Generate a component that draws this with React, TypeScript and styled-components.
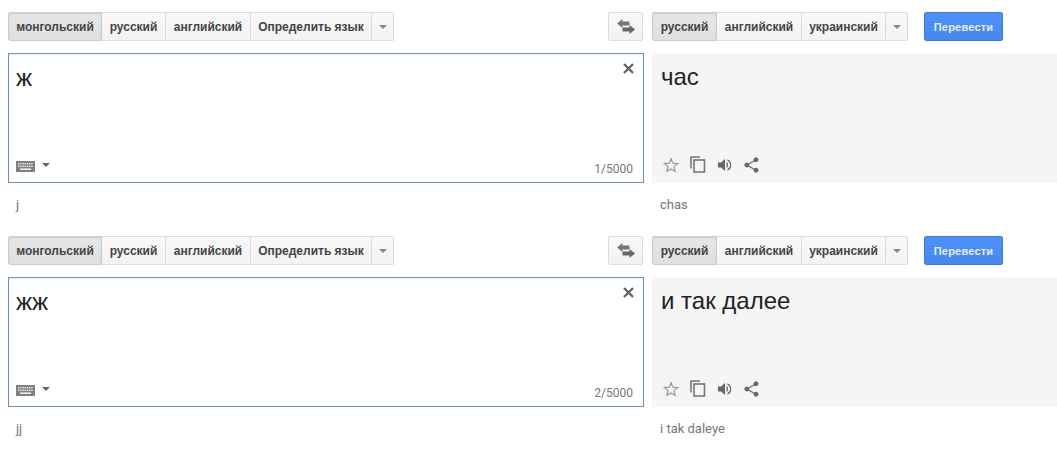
import React from "react";
import styled, { createGlobalStyle } from "styled-components";

const Global = createGlobalStyle`
  html, body { margin: 0; padding: 0; background: #fff; }
  body { font-family: "Liberation Sans", Arial, sans-serif; width: 1057px; height: 449px; overflow: hidden; }
`;

const Page = styled.div`
  display: flex;
  flex-direction: column;
  padding: 12px 0 0 8px;
`;

const Section = styled.section`
  display: grid;
  grid-template-columns: 636px 405px;
  grid-template-rows: 41px 130px 53px;
  column-gap: 8px;
`;

const ToolRow = styled.div`
  display: flex;
  align-items: flex-start;
`;

const LeftTools = styled(ToolRow)`
  justify-content: space-between;
`;

const Group = styled.div`
  display: flex;
`;

const LangButton = styled.button<{ $w: number; $active?: boolean; $first?: boolean; $last?: boolean }>`
  box-sizing: border-box;
  width: ${(p) => p.$w}px;
  height: 29px;
  padding: 0;
  margin: 0;
  border: 1px solid ${(p) => (p.$active ? "#ccc" : "#dcdcdc")};
  border-left-width: ${(p) => (p.$first ? 1 : 0)}px;
  border-radius: ${(p) => (p.$first ? "2px 0 0 2px" : p.$last ? "0 2px 2px 0" : "0")};
  background: ${(p) => (p.$active ? "linear-gradient(#e6e6e6, #e0e0e0)" : "linear-gradient(#f8f8f8, #f3f3f3)")};
  box-shadow: ${(p) => (p.$active ? "inset 0 1px 2px rgba(0,0,0,.1)" : "none")};
  color: #444;
  font: bold 12px "Liberation Sans", Arial, sans-serif;
  display: flex;
  align-items: center;
  justify-content: center;
`;

const Caret = styled.span`
  width: 0;
  height: 0;
  border-left: 4px solid transparent;
  border-right: 4px solid transparent;
  border-top: 4px solid #8a8a8a;
`;

const KeyCaret = styled(Caret)`
  border-top-color: #666;
  margin-bottom: 4px;
`;

const SwapButton = styled.button`
  box-sizing: border-box;
  width: 35px;
  height: 29px;
  margin-right: 1px;
  padding: 0;
  border: 1px solid #dcdcdc;
  border-radius: 2px;
  background: linear-gradient(#f8f8f8, #f2f2f2);
  display: flex;
  align-items: center;
  justify-content: center;
`;

const Translate = styled.button`
  box-sizing: border-box;
  width: 79px;
  height: 29px;
  margin-left: 16px;
  padding: 0;
  border: 1px solid #3a7de0;
  border-radius: 2px;
  background: linear-gradient(#4d90fe, #4787ed);
  color: #e8eefb;
  font: bold 11px "Liberation Sans", Arial, sans-serif;
  letter-spacing: 0.2px;
`;

const InputBox = styled.div`
  box-sizing: border-box;
  position: relative;
  height: 130px;
  border: 1px solid #6d93b8;
  background: #fff;
  box-shadow: inset 0 1px 2px rgba(0,0,0,.08);
`;

const OutputBox = styled.div`
  position: relative;
  height: 130px;
  background: #f5f5f5;
`;

const SourceText = styled.div`
  padding: 8px 7px 0;
  font-size: 24px;
  line-height: 32px;
  color: #222;
`;

const OutputText = styled.div`
  padding: 8px 9px 0;
  font-size: 24px;
  line-height: 32px;
  color: #222;
`;

const Clear = styled.svg`
  position: absolute;
  top: 9px;
  right: 9px;
`;

const Keyboard = styled.div`
  position: absolute;
  left: 7px;
  bottom: 10px;
  display: flex;
  align-items: center;
  gap: 7px;
`;

const Count = styled.div`
  position: absolute;
  right: 10px;
  bottom: 6px;
  font: 12px Roboto, "Liberation Sans", sans-serif;
  color: #777;
`;

const Actions = styled.div`
  position: absolute;
  left: 11px;
  bottom: 10px;
  display: flex;
  align-items: center;
  gap: 11px;
`;

const Roman = styled.div`
  padding: 14px 8px 0;
  font: 13px Roboto, "Liberation Sans", sans-serif;
  line-height: 15px;
  color: #777;
`;

const SwapIcon = () => (
  <svg width="18" height="15" viewBox="0 0 18 15">
    <path d="M0 4.5 L5.5 0 V2.5 H12.5 V6.5 H5.5 V9 Z" fill="#777" />
    <path d="M18 10.5 L12.5 6 V8.5 H5.5 V12.5 H12.5 V15 Z" fill="#666" />
  </svg>
);

const KeyboardIcon = () => (
  <svg width="19" height="11" viewBox="0 0 19 11">
    <rect width="19" height="11" fill="#808080" />
    <g fill="#eee">
      {[0, 1, 2, 3, 4, 5, 6].map((i) => (
        <rect key={i} x={2 + i * 2.2} y="2" width="1.4" height="1.4" />
      ))}
      {[0, 1, 2, 3, 4, 5, 6].map((i) => (
        <rect key={i} x={2 + i * 2.2} y="4.6" width="1.4" height="1.4" />
      ))}
      <rect x="4" y="7.4" width="11" height="1.6" />
    </g>
  </svg>
);

const Star = () => (
  <svg width="16" height="16" viewBox="0 0 24 24" fill="none" stroke="#999" strokeWidth="1.8">
    <path d="M12 2.6 L14.8 9.2 L22 9.8 L16.5 14.5 L18.2 21.5 L12 17.8 L5.8 21.5 L7.5 14.5 L2 9.8 L9.2 9.2 Z" />
  </svg>
);

const Copy = () => (
  <svg width="16" height="17" viewBox="0 0 16 17" fill="none" stroke="#777" strokeWidth="1.6">
    <path d="M1 12.5 V1 H10" />
    <rect x="4" y="4" width="10.5" height="12" />
  </svg>
);

const Speaker = () => (
  <svg width="16" height="16" viewBox="0 0 16 16" fill="#666">
    <path d="M1 5.5 H4 L8 2 V14 L4 10.5 H1 Z" />
    <path d="M9.5 4.8 C11.5 6 11.5 10 9.5 11.2 Z" />
    <path d="M10.5 2.2 C15.5 4.5 15.5 11.5 10.5 13.8 L10.5 12.2 C13.8 10.5 13.8 5.5 10.5 3.8 Z" />
  </svg>
);

const Share = () => (
  <svg width="15" height="16" viewBox="0 0 15 16" fill="#666" stroke="#666">
    <circle cx="2.8" cy="8" r="2" />
    <circle cx="12" cy="2.8" r="2" />
    <circle cx="12" cy="13.2" r="2" />
    <path d="M2.8 8 L12 2.8 M2.8 8 L12 13.2" strokeWidth="1.3" />
  </svg>
);

const rows = [
  { src: "ж", dst: "час", count: "1/5000", srcRoman: "j", dstRoman: "chas" },
  { src: "жж", dst: "и так далее", count: "2/5000", srcRoman: "jj", dstRoman: "i tak daleye" },
];

export default function App() {
  return (
    <Page>
      <Global />
      {rows.map((r) => (
        <Section key={r.count}>
          <LeftTools>
            <Group>
              <LangButton $w={94} $active $first>монгольский</LangButton>
              <LangButton $w={64}>русский</LangButton>
              <LangButton $w={85}>английский</LangButton>
              <LangButton $w={121}>Определить язык</LangButton>
              <LangButton $w={22} $last><Caret /></LangButton>
            </Group>
            <SwapButton><SwapIcon /></SwapButton>
          </LeftTools>
          <ToolRow>
            <Group>
              <LangButton $w={65} $active $first>русский</LangButton>
              <LangButton $w={85}>английский</LangButton>
              <LangButton $w={84}>украинский</LangButton>
              <LangButton $w={22} $last><Caret /></LangButton>
            </Group>
            <Translate>Перевести</Translate>
          </ToolRow>
          <InputBox>
            <SourceText>{r.src}</SourceText>
            <Clear width="11" height="11" viewBox="0 0 11 11">
              <path d="M1 1 L10 10 M10 1 L1 10" stroke="#666" strokeWidth="2.4" />
            </Clear>
            <Keyboard>
              <KeyboardIcon />
              <KeyCaret />
            </Keyboard>
            <Count>{r.count}</Count>
          </InputBox>
          <OutputBox>
            <OutputText>{r.dst}</OutputText>
            <Actions>
              <Star />
              <Copy />
              <Speaker />
              <Share />
            </Actions>
          </OutputBox>
          <Roman>{r.srcRoman}</Roman>
          <Roman>{r.dstRoman}</Roman>
        </Section>
      ))}
    </Page>
  );
}
